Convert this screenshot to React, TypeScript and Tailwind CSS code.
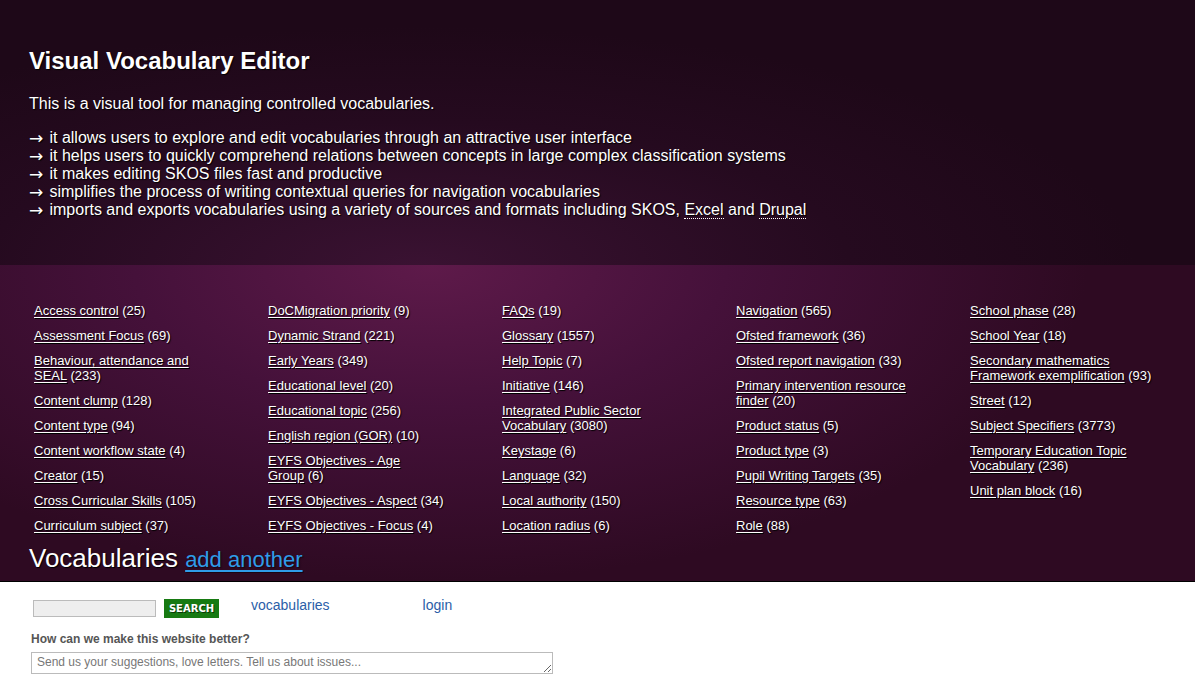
import React from 'react';

type Vocab = {name: string[]; count: number};

const columns: Vocab[][] = [
  [
    {name: ['Access control'], count: 25},
    {name: ['Assessment Focus'], count: 69},
    {name: ['Behaviour, attendance and', 'SEAL'], count: 233},
    {name: ['Content clump'], count: 128},
    {name: ['Content type'], count: 94},
    {name: ['Content workflow state'], count: 4},
    {name: ['Creator'], count: 15},
    {name: ['Cross Curricular Skills'], count: 105},
    {name: ['Curriculum subject'], count: 37},
  ],
  [
    {name: ['DoCMigration priority'], count: 9},
    {name: ['Dynamic Strand'], count: 221},
    {name: ['Early Years'], count: 349},
    {name: ['Educational level'], count: 20},
    {name: ['Educational topic'], count: 256},
    {name: ['English region (GOR)'], count: 10},
    {name: ['EYFS Objectives - Age', 'Group'], count: 6},
    {name: ['EYFS Objectives - Aspect'], count: 34},
    {name: ['EYFS Objectives - Focus'], count: 4},
  ],
  [
    {name: ['FAQs'], count: 19},
    {name: ['Glossary'], count: 1557},
    {name: ['Help Topic'], count: 7},
    {name: ['Initiative'], count: 146},
    {name: ['Integrated Public Sector', 'Vocabulary'], count: 3080},
    {name: ['Keystage'], count: 6},
    {name: ['Language'], count: 32},
    {name: ['Local authority'], count: 150},
    {name: ['Location radius'], count: 6},
  ],
  [
    {name: ['Navigation'], count: 565},
    {name: ['Ofsted framework'], count: 36},
    {name: ['Ofsted report navigation'], count: 33},
    {name: ['Primary intervention resource', 'finder'], count: 20},
    {name: ['Product status'], count: 5},
    {name: ['Product type'], count: 3},
    {name: ['Pupil Writing Targets'], count: 35},
    {name: ['Resource type'], count: 63},
    {name: ['Role'], count: 88},
  ],
  [
    {name: ['School phase'], count: 28},
    {name: ['School Year'], count: 18},
    {name: ['Secondary mathematics', 'Framework exemplification'], count: 93},
    {name: ['Street'], count: 12},
    {name: ['Subject Specifiers'], count: 3773},
    {name: ['Temporary Education Topic', 'Vocabulary'], count: 236},
    {name: ['Unit plan block'], count: 16},
  ],
];

const features = [
  'it allows users to explore and edit vocabularies through an attractive user interface',
  'it helps users to quickly comprehend relations between concepts in large complex classification systems',
  'it makes editing SKOS files fast and productive',
  'simplifies the process of writing contextual queries for navigation vocabularies',
];

function Arrow() {
  return (
    <span className="inline-block h-[18px] w-[16px] align-top font-['DejaVu_Sans',sans-serif] text-[17px] leading-[18px]">
      &rarr;
    </span>
  );
}

function VocabItem({item}: {item: Vocab}) {
  return (
    <li className="mb-[10px] text-[13px] leading-[15px] whitespace-nowrap">
      <a href="#" className="underline underline-offset-[2px] decoration-white">
        {item.name.map((line, i) => (
          <React.Fragment key={i}>
            {i > 0 && <br />}
            {line}
          </React.Fragment>
        ))}
      </a>{' '}
      ({item.count})
    </li>
  );
}

export default function App() {
  return (
    <div className="min-h-[689px] bg-white font-['Liberation_Sans',Arial,sans-serif]">
      <header className="bg-[radial-gradient(ellipse_60%_90%_at_35%_100%,#3a1232_0%,#250a1f_60%,#1e0818_100%)] px-[29px] pt-[47px] pb-[46px] text-white">
        <h1 className="text-[24px] leading-[28px] font-bold [text-shadow:1px_1px_1px_#000]">
          Visual Vocabulary Editor
        </h1>
        <p className="mt-[20px] text-[16px] leading-[18px] [text-shadow:1px_1px_1px_#000]">
          This is a visual tool for managing controlled vocabularies.
        </p>
        <ul className="mt-[16px] text-[16px] leading-[18px] [text-shadow:1px_1px_1px_#000]">
          {features.map(f => (
            <li key={f} className="h-[18px]">
              <Arrow /> {f}
            </li>
          ))}
          <li className="h-[18px]">
            <Arrow /> imports and exports vocabularies using a variety of sources and formats including SKOS,{' '}
            <span className="border-b border-dotted border-white">Excel</span> and{' '}
            <span className="border-b border-dotted border-white">Drupal</span>
          </li>
        </ul>
      </header>

      <section className="border-b border-black bg-[radial-gradient(ellipse_55%_100%_at_36%_0%,#5e1a4a_0%,#45113a_45%,#2e0a22_100%)] pt-[38px] pb-[6px] pl-[34px] text-white [text-shadow:1px_1px_1px_#000]">
        <div className="flex">
          {columns.map((col, i) => (
            <ul key={i} className="w-[234px] shrink-0">
              {col.map(item => (
                <VocabItem key={item.name.join(' ')} item={item} />
              ))}
            </ul>
          ))}
        </div>
        <h2 className="-ml-[5px] text-[26px] leading-[30px]">
          Vocabularies{' '}
          <a href="#" className="text-[22px] text-[#2f9ce9] underline underline-offset-[3px] [text-shadow:1px_1px_1px_#1a0512]">
            add another
          </a>
        </h2>
      </section>

      <footer className="px-[31px] pt-[17px] pb-[14px]">
        <div className="flex items-start">
          <input
            type="text"
            className="mt-px ml-[2px] h-[17px] w-[123px] border border-[#bbb] bg-[#eee]"
          />
          <button className="ml-[8px] h-[19px] w-[55px] bg-[#177a12] font-['DejaVu_Sans',sans-serif] text-[10px] leading-[19px] font-bold text-white [text-shadow:1px_1px_0_#0a3a08]">
            SEARCH
          </button>
          <a href="#" className="ml-[32px] -mt-[2px] text-[14px] leading-[16px] text-[#2b5ea8]">
            vocabularies
          </a>
          <a href="#" className="ml-[93px] -mt-[2px] text-[14px] leading-[16px] text-[#2b5ea8]">
            login
          </a>
        </div>
        <p className="mt-[14px] text-[12px] leading-[14px] font-bold text-[#555]">
          How can we make this website better?
        </p>
        <textarea
          rows={1}
          placeholder="Send us your suggestions, love letters. Tell us about issues..."
          className="mt-[6px] block h-[22px] w-[522px] border border-[#bbb] px-[5px] py-[2px] text-[12px] leading-[15px] placeholder:text-[#777]"
        />
      </footer>
    </div>
  );
}
